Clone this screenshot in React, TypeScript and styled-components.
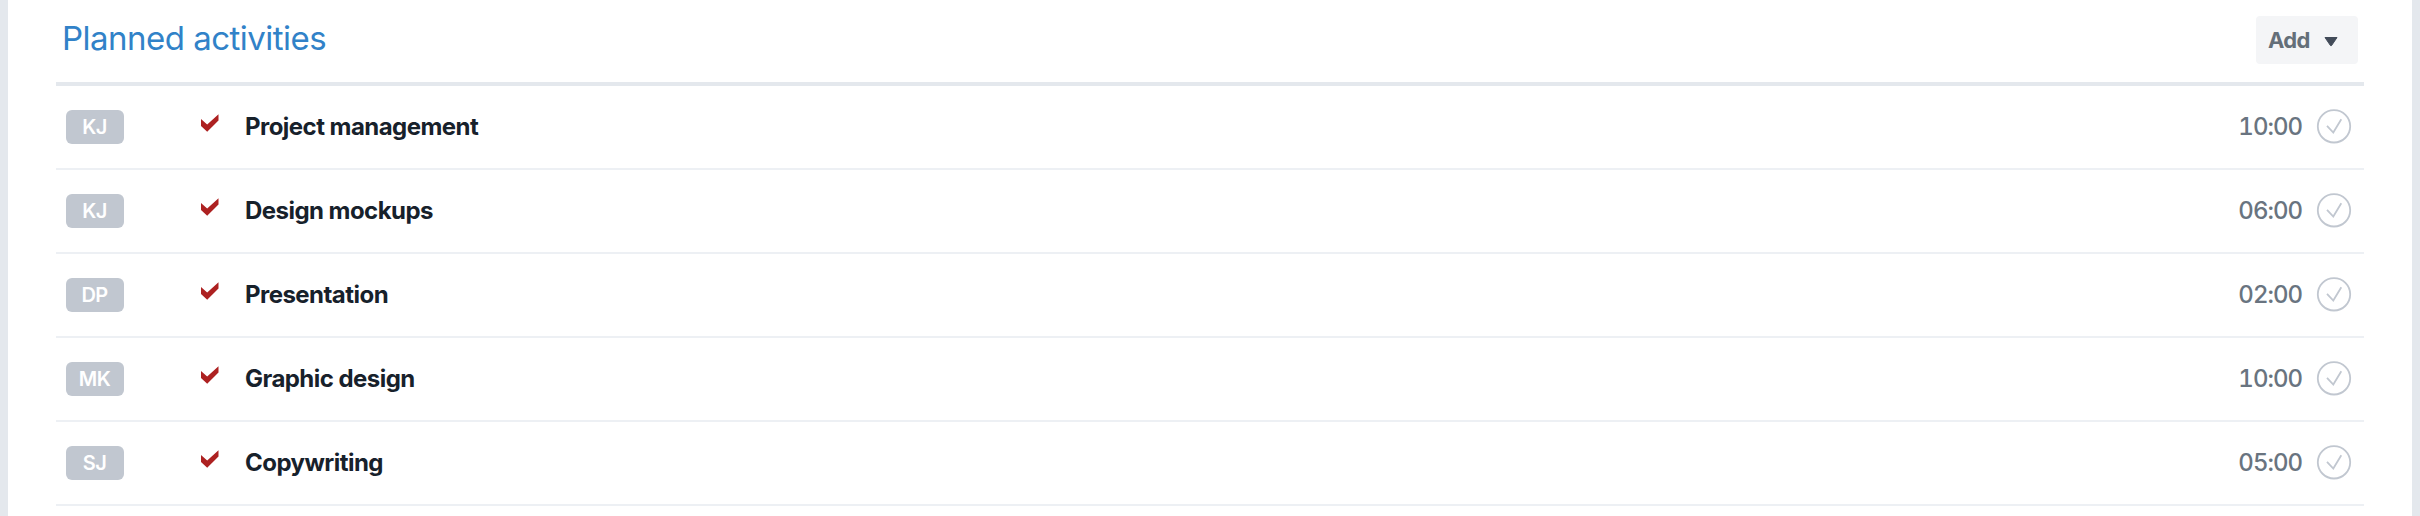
import React from "react";
import styled, { createGlobalStyle } from "styled-components";

const GlobalStyle = createGlobalStyle`
  * { box-sizing: border-box; }
  body { margin: 0; background: #fff; }
`;

const Panel = styled.section`
  height: 516px;
  overflow: hidden;
  padding: 0 48px;
  border: solid #e4e8ed;
  border-width: 0 8px;
  background: #fff;
  font-family: Inter, "Liberation Sans", sans-serif;
`;

const Header = styled.header`
  display: flex;
  justify-content: space-between;
  align-items: flex-start;
  height: 86px;
  padding: 16px 6px 0 6px;
  border-bottom: 4px solid #e4e8ed;
`;

const Title = styled.h2`
  margin: 0;
  font-size: 33px;
  line-height: 45px;
  font-weight: 400;
  letter-spacing: -0.52px;
  color: #3182c8;
`;

const AddButton = styled.button`
  display: flex;
  align-items: center;
  justify-content: space-between;
  width: 102px;
  height: 48px;
  padding: 0 20px 0 12px;
  border: 0;
  border-radius: 4px;
  background: #f4f5f7;
  font-family: inherit;
  font-size: 22px;
  font-weight: 700;
  letter-spacing: -0.7px;
  color: #646f79;
`;

const List = styled.ul`
  margin: 0;
  padding: 0;
  list-style: none;
`;

const Row = styled.li`
  display: flex;
  align-items: center;
  height: 84px;
  padding: 0 12px 0 10px;
  border-bottom: 2px solid #edf0f4;
`;

const Badge = styled.span`
  width: 58px;
  height: 34px;
  padding-right: 1px;
  border-radius: 6px;
  background: #c1c7d0;
  color: #fff;
  font-size: 20px;
  line-height: 34px;
  font-weight: 600;
  letter-spacing: -0.6px;
  text-align: center;
`;

const TaskCheck = styled.svg`
  width: 20px;
  height: 20px;
  margin: 0 24px 6px 76px;
`;

const Name = styled.span`
  flex: 1;
  padding-left: 1px;
  font-size: 24px;
  line-height: 34px;
  font-weight: 700;
  letter-spacing: -0.54px;
  color: #17212b;
`;

const Time = styled.span`
  margin-right: 14px;
  font-size: 24px;
  line-height: 34px;
  font-weight: 500;
  font-variant-numeric: tabular-nums;
  letter-spacing: -1px;
  color: #697480;
`;

const DoneIcon = styled.svg`
  width: 36px;
  height: 36px;
`;

const activities = [
  { owner: "KJ", name: "Project management", time: "10:00" },
  { owner: "KJ", name: "Design mockups", time: "06:00" },
  { owner: "DP", name: "Presentation", time: "02:00" },
  { owner: "MK", name: "Graphic design", time: "10:00" },
  { owner: "SJ", name: "Copywriting", time: "05:00" },
];

export default function App() {
  return (
    <>
      <GlobalStyle />
      <Panel>
        <Header>
          <Title>Planned activities</Title>
          <AddButton>
            Add
            <svg width="14" height="14" viewBox="0 0 14 14">
              <path d="M1 4.5h12L7.5 12.6q-.5.7-1 0Z" fill="#424b59" stroke="#424b59" strokeLinejoin="round" />
            </svg>
          </AddButton>
        </Header>
        <List>
          {activities.map((a, i) => (
            <Row key={i}>
              <Badge>{a.owner}</Badge>
              <TaskCheck viewBox="0 0 20 20">
                <path d="M1 5L7.2 10.4L18.5 0.3V6.6L7.2 17.8L1 12Z" fill="#ad2121" />
              </TaskCheck>
              <Name>{a.name}</Name>
              <Time>{a.time}</Time>
              <DoneIcon viewBox="0 0 36 36" fill="none" stroke="#c1c7d0">
                <circle cx="18" cy="17.3" r="16.2" strokeWidth="1.8" />
                <path d="M11 16.8L17.3 23.5L25.3 10.3" strokeWidth="1.8" />
              </DoneIcon>
            </Row>
          ))}
        </List>
      </Panel>
    </>
  );
}
